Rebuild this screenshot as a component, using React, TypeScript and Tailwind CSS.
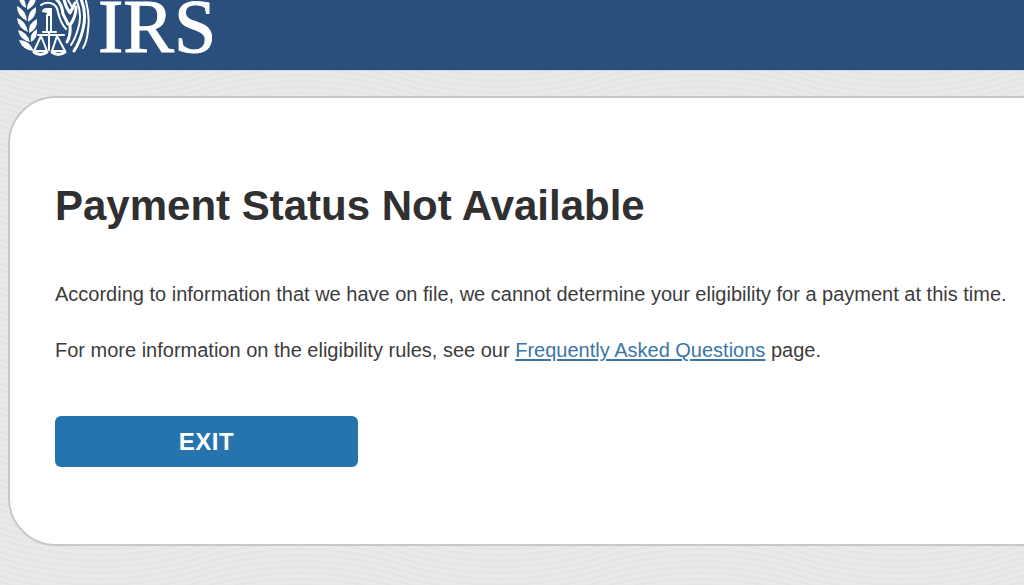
const WAVE_OFFSETS = [-24, -18, -12, -6, 0, 6, 12, 18, 24];

function EagleEmblem() {
  return (
    <svg viewBox="0 0 74 58" className="h-[58px] w-[74px] shrink-0" fill="none" aria-hidden="true">
      <g fill="#fff">
        <path d="M3 -6 Q10 -1 10 8 Q2 4 3 -6Z" />
        <path d="M1 6 Q10 10 11 21 Q1 16 1 6Z" />
        <path d="M1 18 Q10 21 12 32 Q2 28 1 18Z" />
        <path d="M2 30 Q11 32 14 42 Q4 40 2 30Z" />
        <path d="M3 40 Q13 40 18 51 Q7 51 3 40Z" />
        <path d="M20 -5 Q21 5 11 10 Q11 0 20 -5Z" />
        <path d="M20 7 Q21 17 12 22 Q11 12 20 7Z" />
        <path d="M21 19 Q22 29 13 33 Q12 23 21 19Z" />
        <path d="M21 29 Q22 38 15 42 Q13 34 21 29Z" />
        <path d="M26 12 Q26 8 31 8 H36 V13 H34 V16 H31 V13Z" />
      </g>
      <g stroke="#fff" strokeLinecap="round" strokeLinejoin="round">
        <path d="M25 5 Q30 1 37 4 Q41 6 42 12 Q44 22 50 29" strokeWidth="2" />
        <path d="M40 -1 Q46 4 47 14 L52 24" strokeWidth="3" />
        <path d="M48 -1 Q49 6 54 13 L59 3" strokeWidth="3" />
        <path d="M52 0 L56 7" strokeWidth="2" />
        <path d="M60 7 Q60 17 54 25 Q55 35 51 42" strokeWidth="3" />
        <path d="M60 -1 Q67 14 62 29 Q59 39 55 45" strokeWidth="2" />
        <path d="M65 -1 Q71 13 67 29 Q64 42 58 51" strokeWidth="3" />
        <path d="M70 1 Q74 16 72 30 Q71 42 67 48" strokeWidth="2" />
        <path d="M31 15 V31 M35 13 V31 M27 32 H40 M22 35 H48 M33 33 V50" strokeWidth="2" />
        <path d="M25 36 L18 51 H31Z M41 36 L36 51 H49Z" strokeWidth="2" />
        <path d="M18 52 Q24 57 31 52 M36 52 Q42 57 49 52" strokeWidth="3" />
      </g>
    </svg>
  );
}

function WaveBackdrop() {
  return (
    <svg className="absolute inset-0 -z-10 h-full w-full" aria-hidden="true">
      <defs>
        <pattern id="waves" width="400" height="6" patternUnits="userSpaceOnUse">
          {WAVE_OFFSETS.map((y) => (
            <path
              key={y}
              d={`M-200 ${y} Q-100 ${y - 30} 0 ${y} T200 ${y} T400 ${y} T600 ${y}`}
              fill="none"
              stroke="#e4e4e4"
              strokeWidth="2"
            />
          ))}
        </pattern>
      </defs>
      <rect width="100%" height="100%" fill="#e9e9e9" />
      <rect width="100%" height="100%" fill="url(#waves)" />
    </svg>
  );
}

export default function App() {
  return (
    <div className="relative isolate min-h-screen overflow-hidden font-['Liberation_Sans',Arial,sans-serif] text-[#3c3c3c]">
      <WaveBackdrop />
      <header className="flex h-[71px] items-start border-b border-[#c9d6e4] bg-[#2a4f7c] pl-4">
        <a href="#home" className="flex items-start gap-2 text-white" aria-label="IRS home">
          <EagleEmblem />
          <span className="font-['Liberation_Serif','Times_New_Roman',serif] text-[76px] leading-[52px] [-webkit-text-stroke:1px_white]">IRS</span>
        </a>
      </header>
      <main className="mt-[25px] -mr-12 ml-2 rounded-[48px] border-2 border-[#c8c8c8] bg-white pt-[82px] pr-12 pb-[77px] pl-[45px]">
        <h1 className="text-[42px] leading-[52px] font-bold text-[#303030]">Payment Status Not Available</h1>
        <p className="mt-[48px] text-[20px] leading-7">
          According to information that we have on file, we cannot determine your eligibility for a payment at this time.
        </p>
        <p className="mt-[28px] text-[20px] leading-7">
          For more information on the eligibility rules, see our{" "}
          <a href="#faq" className="text-[#3a76a6] underline decoration-2 underline-offset-2">Frequently Asked Questions</a> page.
        </p>
        <button type="button" className="mt-[52px] h-[51px] w-[303px] rounded-md bg-[#2574ae] text-[24px] font-bold tracking-wide text-white">
          EXIT
        </button>
      </main>
    </div>
  );
}
